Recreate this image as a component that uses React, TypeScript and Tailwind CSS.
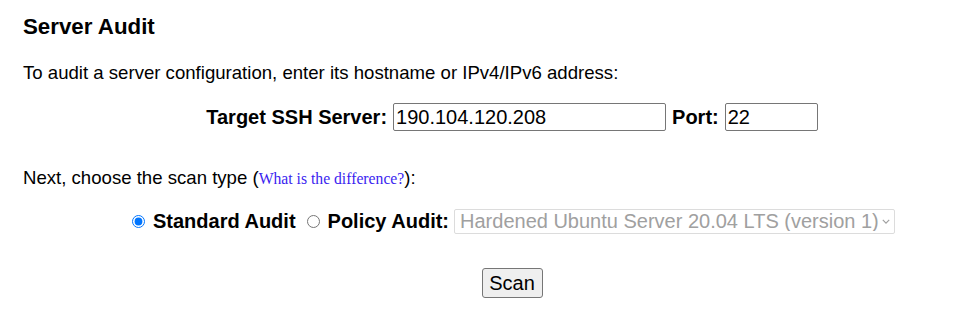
export default function App() {
  return (
    <div className="h-[327px] w-[973px] overflow-hidden bg-white font-['Liberation_Sans',Arial,sans-serif] text-black">
      <div className="w-[1001px] pl-[23px]">
        <h2 className="pt-[14px] text-[22.3px] font-bold leading-[26px]">Server Audit</h2>

        <p className="mt-[20px] text-[18.6px] leading-[26px]">
          To audit a server configuration, enter its hostname or IPv4/IPv6 address:
        </p>

        <div className="mt-[16px] flex items-center justify-center gap-[6px] text-[20px] font-bold">
          <span>Target SSH Server:</span>
          <input
            type="text"
            defaultValue="190.104.120.208"
            className="h-[28px] w-[273px] rounded-[2px] border border-[#767676] px-[2px] text-[20px] leading-none font-normal"
          />
          <span>Port:</span>
          <input
            type="text"
            defaultValue="22"
            className="h-[28px] w-[93px] rounded-[2px] border border-[#767676] px-[2px] text-[20px] leading-none font-normal"
          />
        </div>

        <p className="mt-[33px] text-[18.6px] leading-[26px]">
          Next, choose the scan type (
          <a href="#" className="font-['Liberation_Serif','Times_New_Roman',serif] text-[15.7px] text-[#3b1ff0]">
            What is the difference?
          </a>
          ):
        </p>

        <div className="mt-[14px] flex items-center justify-center gap-[5px] text-[20px] font-bold">
          <input type="radio" name="scan" defaultChecked className="m-[3px] h-[13px] w-[13px]" />
          <span>Standard Audit</span>
          <input type="radio" name="scan" className="my-[3px] mr-[3px] ml-[6px] h-[13px] w-[13px]" />
          <span>Policy Audit:</span>
          <div className="relative">
            <select
              disabled
              className="block h-[25px] w-[441px] appearance-none rounded-[2px] border border-[#dcdcdc] pl-[5px] text-[20px] leading-none font-normal text-[#a0a0a0]"
            >
              <option>Hardened Ubuntu Server 20.04 LTS (version 1)</option>
            </select>
            <svg
              viewBox="0 0 10 6"
              className="pointer-events-none absolute right-[5px] top-[10px] h-[5px] w-[8px]"
              fill="none"
              stroke="#a0a0a0"
              strokeWidth="1.5"
            >
              <path d="M1 1l4 4 4-4" />
            </svg>
          </div>
        </div>

        <div className="mt-[32px] flex justify-center">
          <button className="h-[30px] w-[61px] rounded-[3px] border border-[#767676] bg-[#efefef] text-[20px] leading-none">
            Scan
          </button>
        </div>
      </div>
    </div>
  );
}
